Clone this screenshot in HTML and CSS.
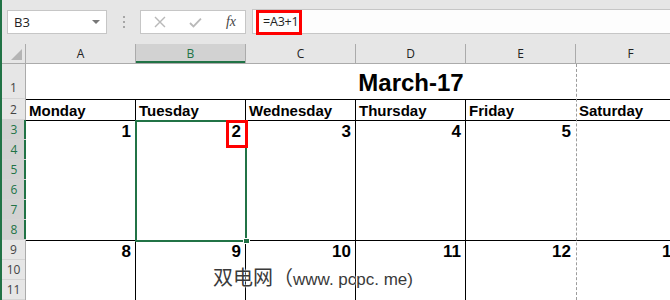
FILE: index.html
```html
<!DOCTYPE html>
<html>
<head>
  <title>March-17</title>
  <link rel="stylesheet" href="styles.css">
</head>
<body>
<div class="app">
  <div class="toolbar">
    <div class="namebox"><span>B3</span><span class="caret"></span></div>
    <div class="grip"><i></i><i></i><i></i></div>
    <div class="fbtns">
      <svg class="ico" width="12" height="12" viewBox="0 0 12 12"><path d="M1 1L11 11M11 1L1 11" stroke="#b9b9b9" stroke-width="1.4" fill="none"/></svg>
      <svg class="ico" width="13" height="11" viewBox="0 0 13 11"><path d="M1 6L4.5 9.5L12 1.5" stroke="#b9b9b9" stroke-width="1.8" fill="none"/></svg>
      <span class="fx">fx</span>
    </div>
    <div class="finput"><span>=A3+1</span></div>
  </div>

  <div class="sheet">
    <div class="rowhdrs">
      <div class="rh corner"><span class="tri"></span></div>
      <div class="rh r1">1</div>
      <div class="rh r2">2</div>
      <div class="rh sel">3</div>
      <div class="rh sel">4</div>
      <div class="rh sel">5</div>
      <div class="rh sel">6</div>
      <div class="rh sel">7</div>
      <div class="rh sel">8</div>
      <div class="rh">9</div>
      <div class="rh">10</div>
      <div class="rh">11</div>
    </div>

    <div class="cols">
      <div class="colhead">
        <div class="ch">A</div>
        <div class="ch on">B</div>
        <div class="ch">C</div>
        <div class="ch">D</div>
        <div class="ch">E</div>
        <div class="ch">F</div>
        <div class="ch"></div>
      </div>
      <div class="title">March-17</div>
      <div class="days">
        <div class="day">Monday</div>
        <div class="day">Tuesday</div>
        <div class="day">Wednesday</div>
        <div class="day">Thursday</div>
        <div class="day brk">Friday</div>
        <div class="day">Saturday</div>
        <div class="day"></div>
      </div>
      <div class="week">
        <div class="date">1</div>
        <div class="date">2</div>
        <div class="date">3</div>
        <div class="date">4</div>
        <div class="date brk">5</div>
        <div class="date"></div>
        <div class="date"></div>
      </div>
      <div class="week">
        <div class="date">8</div>
        <div class="date">9</div>
        <div class="date">10</div>
        <div class="date">11</div>
        <div class="date brk">12</div>
        <div class="date">13</div>
        <div class="date"></div>
      </div>
    </div>

    <div class="pagebreak"></div>
    <div class="selection"><span class="handle"></span></div>
    <div class="mark mark-cell"></div>
    <div class="watermark">双电网（<span class="wm-latin">www. pcpc. me)</span></div>
  </div>
  <div class="mark mark-formula"></div>
</div>
</body>
</html>
```

FILE: styles.css
```css
*
{
    box-sizing: border-box;
}

html, body
{
    margin: 0;
    width: 670px;
    height: 300px;
    overflow: hidden;
    background: #fff;
}

.app
{
    position: relative;
    height: 300px;
    border-left: 2px solid #217346;
    font-family: "Open Sans", "Noto Sans", sans-serif;
    color: #444;
}

/* formula bar */
.toolbar
{
    display: flex;
    align-items: flex-start;
    height: 44px;
    padding: 10px 0 0 5px;
    background: #e6e6e6;
}

.namebox
{
    display: flex;
    align-items: center;
    justify-content: space-between;
    width: 100px;
    height: 24px;
    padding: 0 6px 0 6px;
    background: #fff;
    border: 1px solid #c6c6c6;
    font-size: 13px;
    color: #222;
}

.caret
{
    width: 0;
    height: 0;
    border-left: 4px solid transparent;
    border-right: 4px solid transparent;
    border-top: 4px solid #777;
}

.grip
{
    display: flex;
    flex-direction: column;
    gap: 3px;
    margin: 6px 15px 0 16px;
}

.grip i
{
    display: block;
    width: 2px;
    height: 2px;
    background: #a6a6a6;
}

.fbtns
{
    display: flex;
    align-items: center;
    width: 106px;
    height: 24px;
    padding: 0 9px 0 13px;
    background: #fff;
    border: 1px solid #c6c6c6;
    gap: 23px;
}

.fx
{
    font-family: "Liberation Serif", serif;
    font-style: italic;
    font-size: 14px;
    color: #444;
    margin-left: 1px;
}

.finput
{
    flex: 1;
    height: 25px;
    margin: -1px 0 0 6px;
    padding: 0 0 1px 10px;
    display: flex;
    align-items: center;
    background: #fdfdfd;
    border: 1px solid #c6c6c6;
    border-right: 0;
    font-size: 12.5px;
    letter-spacing: -0.2px;
    color: #222;
}

/* sheet */
.sheet
{
    position: relative;
    display: flex;
    height: 256px;
    overflow: hidden;
}

.rowhdrs
{
    flex: none;
    width: 24px;
    background: #e6e6e6;
    border-right: 1px solid #ababab;
}

.rh
{
    display: flex;
    align-items: center;
    justify-content: center;
    height: 20px;
    border-bottom: 1px solid #d4d4d4;
    font-size: 12px;
    color: #444;
}

.rh.corner
{
    position: relative;
    border-bottom: 1px solid #ababab;
}

.tri
{
    position: absolute;
    right: 3px;
    bottom: 3px;
    width: 0;
    height: 0;
    border-left: 11px solid transparent;
    border-bottom: 11px solid #b4b4b4;
}

.rh.r1
{
    height: 35px;
    align-items: flex-end;
    padding-bottom: 2px;
}

.rh.r2
{
    height: 21px;
}

.rh.sel
{
    background: #d2d2d2;
    color: #217346;
    box-shadow: inset -2px 0 0 #217346;
    margin-right: -1px;
}

.cols
{
    flex: none;
    width: 770px;
}

.colhead
{
    display: flex;
    height: 20px;
    background: #e6e6e6;
    border-bottom: 1px solid #ababab;
}

.ch
{
    display: flex;
    align-items: center;
    justify-content: center;
    width: 110px;
    border-right: 1px solid #ababab;
    font-size: 12px;
    color: #222;
}

.ch.on
{
    background: #d2d2d2;
    color: #217346;
    box-shadow: inset 0 -2px 0 #217346;
}

.title
{
    height: 35px;
    padding-bottom: 4px;
    display: flex;
    align-items: flex-end;
    justify-content: center;
    font-family: "Liberation Sans", Arial, sans-serif;
    font-weight: bold;
    font-size: 24px;
    line-height: 1;
    color: #000;
}

.days, .week
{
    display: flex;
    border-top: 1px solid #000;
}

.days
{
    height: 21px;
}

.week
{
    height: 120px;
}

.day, .date
{
    width: 110px;
    flex: none;
    border-right: 1px solid #000;
    font-family: "Liberation Sans", Arial, sans-serif;
    font-weight: bold;
    color: #000;
}

.day
{
    padding: 3px 0 0 3px;
    font-size: 15px;
    line-height: 16px;
}

.date
{
    padding: 3px 4px 0 0;
    text-align: right;
    font-size: 17px;
    line-height: 16px;
}

.day.brk, .date.brk
{
    border-right-color: transparent;
}

/* overlays */
.pagebreak
{
    position: absolute;
    left: 574px;
    top: 20px;
    bottom: 0;
    border-left: 1px dashed #9c9c9c;
}

.selection
{
    position: absolute;
    left: 133px;
    top: 76px;
    width: 112px;
    height: 122px;
    border: 2px solid #217346;
}

.handle
{
    position: absolute;
    right: -5px;
    bottom: -4px;
    width: 7px;
    height: 6px;
    background: #217346;
    border: 1px solid #fff;
}

.mark
{
    position: absolute;
    border: 3px solid #f00;
}

.mark-cell
{
    left: 224px;
    top: 76px;
    width: 22px;
    height: 28px;
}

.mark-formula
{
    left: 254px;
    top: 10px;
    width: 46px;
    height: 25px;
}

.watermark
{
    position: absolute;
    left: 211px;
    top: 221px;
    font-family: "Noto Sans CJK SC", sans-serif;
    font-size: 20px;
    line-height: 24px;
    color: #3a3a3a;
    text-shadow: 0 0 2px #fff, 0 0 2px #fff;
    white-space: nowrap;
}

.wm-latin
{
    font-family: "Liberation Sans", Arial, sans-serif;
    font-size: 17px;
}
```
